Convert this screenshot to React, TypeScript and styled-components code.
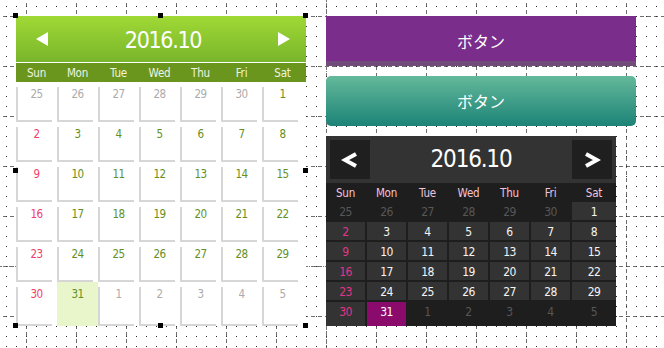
import styled, { createGlobalStyle } from 'styled-components'

const GlobalStyle = createGlobalStyle`
  html, body {
    margin: 0;
    padding: 0;
    background: #fff;
  }
`

const NUM_FONT = `"DejaVu Sans Condensed", "DejaVu Sans", sans-serif`

type Day = { n: number; kind: 'prev' | 'cur' | 'next' }

const days: Day[] = [
  ...[25, 26, 27, 28, 29, 30].map((n) => ({ n, kind: 'prev' as const })),
  ...Array.from({ length: 31 }, (_, i) => ({ n: i + 1, kind: 'cur' as const })),
  ...[1, 2, 3, 4, 5].map((n) => ({ n, kind: 'next' as const }))
]

const weekdays = ['Sun', 'Mon', 'Tue', 'Wed', 'Thu', 'Fri', 'Sat']

// design surface with a dot grid and dashed lines every 50px
const Canvas = styled.div`
  position: relative;
  width: 664px;
  height: 348px;
  box-sizing: border-box;
  padding: 16px 0 0 16px;
  display: flex;
  gap: 20px;
  align-items: flex-start;
  overflow: hidden;
  background-color: #fff;
  background-image:
    conic-gradient(at 1px 1px, transparent 270deg, #2a2a2a 0),
    conic-gradient(at 1px 4px, transparent 270deg, #6e6e6e 0),
    conic-gradient(at 4px 1px, transparent 270deg, #6e6e6e 0);
  background-size: 10px 10px, 50px 7px, 7px 50px;
  background-position: 6px 6px, 26px 3px, 3px 16px;
`

const Guide = styled.div<{ $vertical?: boolean }>`
  position: absolute;
  ${(p) =>
    p.$vertical
      ? `width: 1px; border-left: 1px dotted #777;`
      : `height: 1px; border-top: 1px dotted #777;`}
`

/* ---------- green calendar ---------- */

const Selected = styled.div`
  position: relative;
`

const Handle = styled.div`
  position: absolute;
  width: 5px;
  height: 5px;
  background: #000;
`

const GreenCal = styled.div`
  width: 290px;
  height: 310px;
  display: flex;
  flex-direction: column;
  background: #fff;
  font-family: ${NUM_FONT};
`

const GreenHead = styled.div`
  height: 46px;
  border-bottom: 1px solid #fff;
  background: linear-gradient(#a0d935, #79b52c);
  display: flex;
  align-items: center;
  justify-content: space-between;
  padding: 0 16px 0 20px;
`

const GreenTitle = styled.div`
  color: #fff;
  font-size: 23px;
  letter-spacing: -1.3px;
  line-height: 28px;
  padding-top: 1px;
`

const GreenWeek = styled.div`
  height: 19px;
  background: #6a961e;
  display: grid;
  grid-template-columns: repeat(7, 41px);
  align-items: center;
`

const GreenWeekLabel = styled.div`
  color: #eef4e2;
  font-size: 11.5px;
  letter-spacing: -0.2px;
  text-align: center;
`

const GreenGrid = styled.div`
  flex: 1;
  display: grid;
  grid-template-columns: repeat(7, 41px);
  grid-template-rows: repeat(5, 40px) 44px;
`

const GreenSlot = styled.div<{ $today?: boolean }>`
  padding: 5px 5px 0 0;
  background: ${(p) => (p.$today ? '#e9f5cb' : 'transparent')};
`

const GreenBox = styled.div<{ $color: string; $today?: boolean }>`
  height: 100%;
  box-sizing: border-box;
  border-left: 2px solid ${(p) => (p.$today ? 'transparent' : '#d6d6d6')};
  border-bottom: 2px solid ${(p) => (p.$today ? 'transparent' : '#d6d6d6')};
  padding-left: 3px;
  color: ${(p) => p.$color};
  font-size: 11.5px;
  letter-spacing: -0.6px;
  line-height: 14px;
  text-align: center;
`

const Triangle = ({ dir }: { dir: 'left' | 'right' }) => (
  <svg width="12" height="14" viewBox="0 0 12 14">
    <polygon points={dir === 'left' ? '12,0 0,7 12,14' : '0,0 12,7 0,14'} fill="#fff" />
  </svg>
)

function greenColor(d: Day, col: number) {
  if (d.kind !== 'cur') return '#ababab'
  if (col === 0) return '#f0406a'
  return '#63901f'
}

function GreenCalendar() {
  return (
    <GreenCal>
      <GreenHead>
        <Triangle dir="left" />
        <GreenTitle>2016.10</GreenTitle>
        <Triangle dir="right" />
      </GreenHead>
      <GreenWeek>
        {weekdays.map((w) => (
          <GreenWeekLabel key={w}>{w}</GreenWeekLabel>
        ))}
      </GreenWeek>
      <GreenGrid>
        {days.map((d, i) => {
          const today = d.kind === 'cur' && d.n === 31
          return (
            <GreenSlot key={i} $today={today}>
              <GreenBox $color={greenColor(d, i % 7)} $today={today}>
                {d.n}
              </GreenBox>
            </GreenSlot>
          )
        })}
      </GreenGrid>
    </GreenCal>
  )
}

/* ---------- right column ---------- */

const Column = styled.div`
  display: flex;
  flex-direction: column;
  gap: 10px;
`

const BaseButton = styled.button`
  width: 310px;
  height: 50px;
  border: none;
  padding: 0;
  color: #fff;
  font-family: "Noto Sans CJK JP", "Noto Sans", sans-serif;
  font-size: 16px;
  display: flex;
  align-items: center;
  justify-content: center;
`

const PurpleButton = styled(BaseButton)`
  background: #7b2d8c;
  box-shadow: inset 0 -5px 0 #714c7a;
`

const TealButton = styled(BaseButton)`
  border-radius: 5px;
  background: linear-gradient(#64b99a, #1c8377);
`

/* ---------- dark calendar ---------- */

const DarkCal = styled.div`
  width: 290px;
  height: 190px;
  background: #1e1e1e;
  display: flex;
  flex-direction: column;
  font-family: ${NUM_FONT};
`

const DarkHead = styled.div`
  height: 47px;
  box-sizing: border-box;
  background: #333;
  padding: 4px;
  display: flex;
  justify-content: space-between;
  align-items: flex-start;
`

const NavButton = styled.div`
  width: 40px;
  height: 39px;
  background: #1f1f1f;
  display: flex;
  align-items: center;
  justify-content: center;
`

const DarkTitle = styled.div`
  color: #fff;
  font-size: 24px;
  letter-spacing: -1.2px;
  line-height: 39px;
`

const DarkWeek = styled.div`
  height: 19px;
  display: grid;
  grid-template-columns: repeat(6, 39px) 1fr;
  column-gap: 2px;
  align-items: center;
`

const DarkWeekLabel = styled.div`
  color: #f3c3dc;
  font-size: 11.5px;
  letter-spacing: -0.2px;
  text-align: center;
`

const DarkGrid = styled.div`
  height: 124px;
  display: grid;
  grid-template-columns: repeat(6, 39px) 1fr;
  grid-template-rows: repeat(5, 18px) 1fr;
  gap: 2px;
`

const DarkCell = styled.div<{ $bg: string; $color: string }>`
  background: ${(p) => p.$bg};
  color: ${(p) => p.$color};
  font-size: 12px;
  letter-spacing: -0.5px;
  line-height: 20px;
  text-align: center;
`

const Chevron = ({ dir }: { dir: 'left' | 'right' }) => (
  <svg width="18" height="16" viewBox="0 0 18 16">
    <polyline
      points={dir === 'left' ? '15,2 4,8 15,14' : '3,2 14,8 3,14'}
      fill="none"
      stroke="#fff"
      strokeWidth="4"
      strokeLinejoin="miter"
    />
  </svg>
)

function darkCell(d: Day, col: number) {
  if (d.kind !== 'cur') return { bg: 'transparent', color: '#575757' }
  if (d.n === 31) return { bg: '#8a0b6c', color: '#fff' }
  if (col === 0) return { bg: '#333', color: '#e0358a' }
  return { bg: '#333', color: '#f4f4f4' }
}

function DarkCalendar() {
  return (
    <DarkCal>
      <DarkHead>
        <NavButton>
          <Chevron dir="left" />
        </NavButton>
        <DarkTitle>2016.10</DarkTitle>
        <NavButton>
          <Chevron dir="right" />
        </NavButton>
      </DarkHead>
      <DarkWeek>
        {weekdays.map((w) => (
          <DarkWeekLabel key={w}>{w}</DarkWeekLabel>
        ))}
      </DarkWeek>
      <DarkGrid>
        {days.map((d, i) => {
          const c = darkCell(d, i % 7)
          return (
            <DarkCell key={i} $bg={c.bg} $color={c.color}>
              {d.n}
            </DarkCell>
          )
        })}
      </DarkGrid>
    </DarkCal>
  )
}

export default function App() {
  return (
    <>
      <GlobalStyle />
      <Canvas>
        <Guide $vertical style={{ left: 326, top: 0, height: 16 }} />
        <Guide $vertical style={{ left: 326, top: 66, height: 10 }} />
        <Guide $vertical style={{ left: 326, top: 326, height: 22 }} />
        <Guide style={{ left: 0, top: 266, width: 16 }} />
        <Guide style={{ left: 306, top: 266, width: 20 }} />
        <Selected>
          <GreenCalendar />
          <Handle style={{ left: -3, top: -3 }} />
          <Handle style={{ left: 142, top: -3 }} />
          <Handle style={{ left: 287, top: -3 }} />
          <Handle style={{ left: -3, top: 152 }} />
          <Handle style={{ left: 287, top: 152 }} />
          <Handle style={{ left: -3, top: 307 }} />
          <Handle style={{ left: 142, top: 307 }} />
          <Handle style={{ left: 287, top: 307 }} />
        </Selected>
        <Column>
          <PurpleButton>ボタン</PurpleButton>
          <TealButton>ボタン</TealButton>
          <DarkCalendar />
        </Column>
      </Canvas>
    </>
  )
}
